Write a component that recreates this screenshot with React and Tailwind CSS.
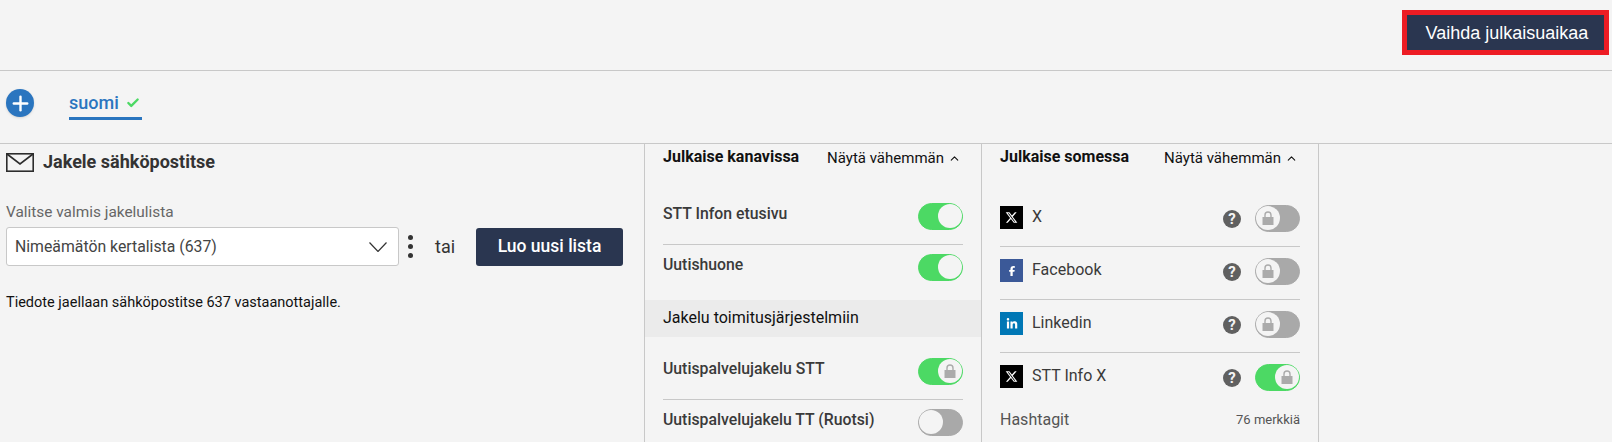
import React from 'react';
import { Check, ChevronUp, Plus } from 'lucide-react';
import { FaXTwitter, FaFacebookF, FaLinkedinIn } from 'react-icons/fa6';

function LockIcon() {
  return (
    <svg width="12" height="14" viewBox="0 0 12 14" fill="none">
      <path d="M3 6.5V4a3 3 0 0 1 6 0v2.5" stroke="#ababab" strokeWidth="1.4" />
      <rect x="0.5" y="6" width="11" height="8" fill="#ababab" />
    </svg>
  );
}

function Toggle({ on, locked }) {
  return (
    <div
      className={`flex h-[27px] w-[45px] shrink-0 rounded-full border-[1.5px] ${
        on ? 'justify-end border-[#4cd964] bg-[#4cd964]' : 'justify-start border-[#a9a9a9] bg-[#a9a9a9]'
      }`}
    >
      <div className="flex h-[24px] w-[24px] items-center justify-center rounded-full bg-[#f4f4f4]">
        {locked && <LockIcon />}
      </div>
    </div>
  );
}

function ChannelRow({ label, on, locked, last }) {
  return (
    <div className={`flex items-center justify-between pt-[9px] ${last ? '' : 'border-b border-[#c8c8c8] pb-[14px]'}`}>
      <span className="mb-[4px] text-[15.8px] leading-[20px] font-medium text-[#3a3a3a]">{label}</span>
      <Toggle on={on} locked={locked} />
    </div>
  );
}

function SocialRow({ icon, bg, label, on, last }) {
  return (
    <div className={`flex items-center pt-[11px] pb-[14px] ${last ? '' : 'border-b border-[#c8c8c8]'}`}>
      <div className={`mb-[1px] flex h-[23px] w-[23px] items-center justify-center text-white ${bg}`}>{icon}</div>
      <span className="ml-[9px] mb-[3px] text-base leading-[20px] text-[#3a3a3a]">{label}</span>
      <span className="ml-auto mr-[14px] mt-[2px] flex h-[18px] w-[18px] items-center justify-center rounded-full bg-[#606060] text-[15px] font-bold text-[#f4f4f4]">
        ?
      </span>
      <Toggle on={on} locked />
    </div>
  );
}

function ColumnHeader({ title }) {
  return (
    <div className="flex items-center justify-between">
      <h3 className="text-base font-bold text-[#111]">{title}</h3>
      <span className="mt-[2px] flex items-center gap-[4px] pr-[2px] text-[15px] text-[#111]">
        Näytä vähemmän
        <ChevronUp size={13} strokeWidth={2} />
      </span>
    </div>
  );
}

export default function App() {
  return (
    <div className="h-[442px] overflow-hidden bg-[#f4f4f4] font-['Roboto',sans-serif]">
      <div className="flex h-[71px] items-start justify-end border-b border-[#c8c8c8] pr-[3px] pt-[10px]">
        <button className="h-[45px] w-[207px] border-[5px] border-[#ed1c24] bg-[#2a3650] pl-[3px] font-['Liberation_Sans',sans-serif] text-lg text-white">
          Vaihda julkaisuaikaa
        </button>
      </div>

      <div className="flex h-[73px] items-start border-b border-[#c8c8c8] pl-[6px] pt-[18px]">
        <div className="flex h-[28px] w-[28px] items-center justify-center rounded-full bg-[#2a75bf] text-white shadow-sm">
          <Plus size={23} strokeWidth={2.5} />
        </div>
        <div className="ml-[35px] -mt-[1px] flex h-[32px] w-[73px] items-center gap-[7px] border-b-[3px] border-[#2a75bf]">
          <span className="text-lg font-medium text-[#2a75bf]">suomi</span>
          <Check size={14} strokeWidth={4} className="text-[#4cd964]" />
        </div>
      </div>

      <div className="flex">
        <div className="w-[644px] px-[6px] pt-[4px]">
          <div className="flex items-center gap-[9px]">
            <svg width="28" height="19" viewBox="0 0 28 19" fill="none" stroke="#2d2d2d" strokeWidth="1.6">
              <rect x="0.8" y="0.8" width="26.4" height="17.4" />
              <path d="M1 1l13 10L27 1" />
            </svg>
            <h2 className="text-lg font-bold text-[#333]">Jakele sähköpostitse</h2>
          </div>
          <label className="mt-[25px] block text-[15.4px] text-[#666]">Valitse valmis jakelulista</label>
          <div className="mt-[3px] flex items-center">
            <div className="flex h-[39px] w-[393px] items-center justify-between rounded-[3px] border border-[#c8c8c8] bg-white pl-[8px] pr-[11px] text-[15.8px] text-[#444]">
              Nimeämätön kertalista (637)
              <svg width="18" height="10" viewBox="0 0 18 10" fill="none" stroke="#333" strokeWidth="1.2">
                <path d="M0.5 0.5L9 9.5l8.5-9" />
              </svg>
            </div>
            <div className="ml-[9px] flex w-[5px] flex-col gap-[4px]">
              <span className="h-[5px] w-[5px] rounded-full bg-[#333]" />
              <span className="h-[5px] w-[5px] rounded-full bg-[#333]" />
              <span className="h-[5px] w-[5px] rounded-full bg-[#333]" />
            </div>
            <span className="ml-[22px] w-[20px] text-lg text-[#333]">tai</span>
            <button className="ml-[21px] h-[38px] w-[147px] rounded-[3px] bg-[#2a3650] text-[17.5px] font-medium text-white">
              Luo uusi lista
            </button>
          </div>
          <p className="mt-[26px] text-[14.5px] text-[#111]">Tiedote jaellaan sähköpostitse 637 vastaanottajalle.</p>
        </div>

        <div className="h-[298px] w-[338px] border-x border-[#c8c8c8]">
          <div className="px-[18px] pt-[1px]">
            <ColumnHeader title="Julkaise kanavissa" />
          </div>
          <div className="mt-[24px] px-[18px]">
            <ChannelRow label="STT Infon etusivu" on />
            <ChannelRow label="Uutishuone" on last />
          </div>
          <div className="mt-[19px] flex h-[37px] items-center bg-[#ebebeb] px-[18px] text-base text-[#111]">
            Jakelu toimitusjärjestelmiin
          </div>
          <div className="mt-[12px] px-[18px]">
            <ChannelRow label="Uutispalvelujakelu STT" on locked />
            <ChannelRow label="Uutispalvelujakelu TT (Ruotsi)" last />
          </div>
        </div>

        <div className="h-[298px] w-[337px] border-r border-[#c8c8c8] px-[18px] pt-[1px]">
          <ColumnHeader title="Julkaise somessa" />
          <div className="mt-[24px]">
            <SocialRow icon={<FaXTwitter size={13} />} bg="bg-black" label="X" />
            <SocialRow icon={<FaFacebookF size={10} />} bg="bg-[#3b5998]" label="Facebook" />
            <SocialRow icon={<FaLinkedinIn size={12} />} bg="bg-[#0077b5]" label="Linkedin" />
            <SocialRow icon={<FaXTwitter size={13} />} bg="bg-black" label="STT Info X" on last />
          </div>
          <div className="mt-[3px] flex items-center justify-between text-[#555]">
            <span className="text-base">Hashtagit</span>
            <span className="text-[13px]">76 merkkiä</span>
          </div>
        </div>
      </div>
    </div>
  );
}
